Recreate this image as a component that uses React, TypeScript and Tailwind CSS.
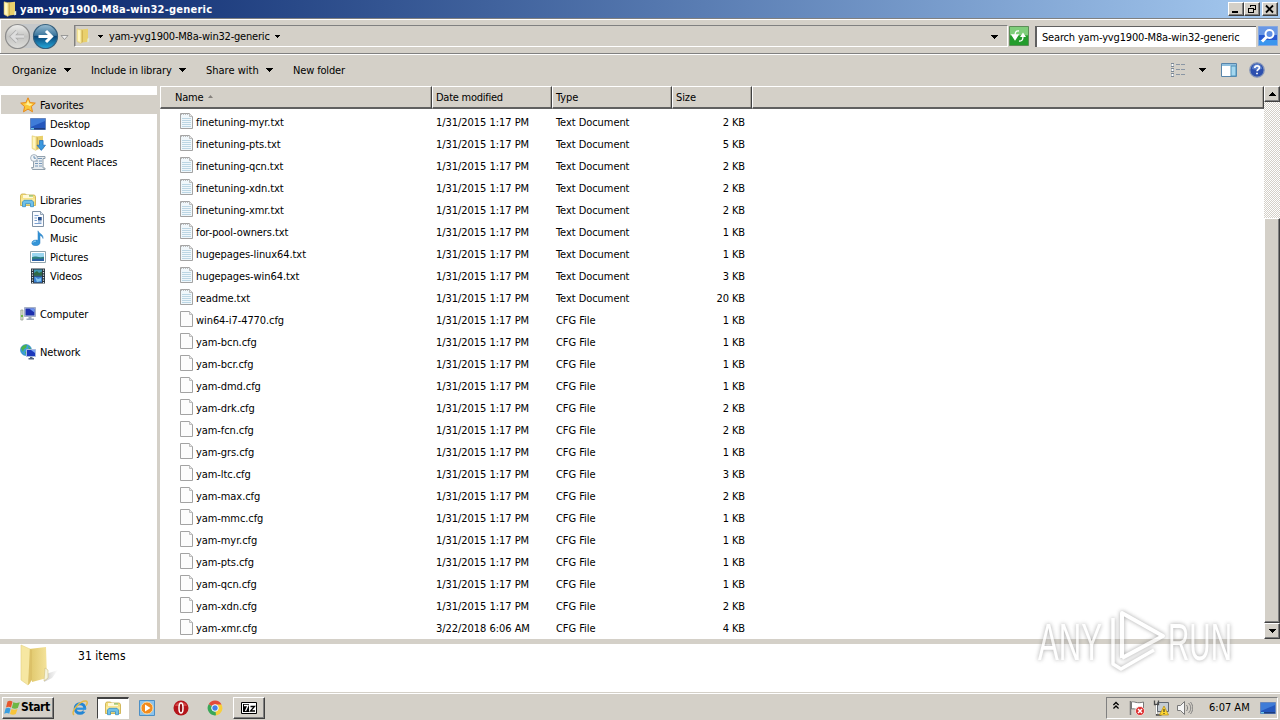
import type { ReactNode } from "react";

type IconProps = { children: ReactNode; className?: string; box?: string };

function Icon({ children, className = "w-4 h-4", box = "0 0 16 16" }: IconProps) {
  return (
    <svg viewBox={box} className={`${className} block shrink-0`} fill="none">
      {children}
    </svg>
  );
}

const FolderArt = () => (
  <>
    <path d="M6 1.500 13 .8v13L7 14.500z" fill="#e9d06c" />
    <path d="M12.400 10.800l1.800-1v4l-2 .7z" fill="#e5ecd4" />
    <path d="M2 .8 7 2v12L6 15.500 2 13.500z" fill="#f7e99f" stroke="#dcc468" strokeWidth=".5" />
    <path d="M6.500 2v13l1.500-1.200V2.400z" fill="#d4b553" />
    <path d="M3 2l2 .5v11l-2-.8z" fill="#fff6c0" />
  </>
);

const StarIcon = () => (
  <Icon>
    <path d="M8 .8l2.100 4.800 5.200.5-3.900 3.500 1.100 5.200L8 12.100l-4.500 2.700 1.100-5.200L.7 6.100l5.200-.5z" fill="#fbc83a" stroke="#e88919" />
    <path d="M8 3l1.200 3.500 3.300.4-2.700 2L8 8.200 4.500 7l2.300-.6z" fill="#fff09a" />
  </Icon>
);
const DesktopIcon = () => (
  <Icon>
    <path d="M.5 2.500h15v11H.5z" fill="#2457bd" stroke="#6686bd" />
    <path d="M1 3h14v2L1 11z" fill="#3f7cd8" />
    <path d="M1 12h14v1.500H1z" fill="#1c3d80" />
    <path d="M1 12h3v1.500H1z" fill="#6bc4e8" />
  </Icon>
);
const DownloadsIcon = () => (
  <Icon>
    <FolderArt />
    <path d="M9.500 5.500h3.600v4.700h2.400L11.300 15.400 7 10.200h2.500z" fill="#3a98df" stroke="#1f69b4" strokeWidth=".7" />
  </Icon>
);
const RecentIcon = () => (
  <Icon>
    <path d="M4 2.500h11v2h-2v9.500h2v1.500H2.500l-1-2h2V6z" fill="#e7ecf0" stroke="#8797a5" strokeWidth=".9" />
    <path d="M5 7h3M9 7h3M5 9.500h3M9 9.500h3M5 12h3M9 12h3M8 4.500h4" stroke="#7798b9" />
    <circle cx="4" cy="4" r="3.400" fill="#f3f7fa" stroke="#91a0ae" strokeWidth=".8" />
    <path d="M4 2v2.200h2" stroke="#49759f" strokeWidth=".8" />
  </Icon>
);
const LibrariesIcon = () => (
  <Icon>
    <path d="M.5 3.500 1.500 2h4l1 1h8l1 1.500v9H.5z" fill="#f3de7c" stroke="#c8a944" strokeWidth=".8" />
    <path d="M3 3h10v3H3z" fill="#fff9d9" />
    <path d="M9 3.300h4v1.200H9z" fill="#7fb34f" />
    <path d="M1 6.500h14v3H1z" fill="#fae99a" />
    <path d="M2.500 14.700V10l1.500-1.700h8l1.500 1.700v4.700h-3v-3h-5v3z" fill="#6fc0e9" stroke="#3a8fc4" strokeWidth=".8" />
  </Icon>
);
const DocumentIcon = () => (
  <Icon>
    <path d="M2.500.500h8l3 3v12h-11z" fill="#fafcff" stroke="#7f91a5" />
    <path d="M10.500.500v3h3" fill="#dce6ef" stroke="#7f91a5" strokeWidth=".8" />
    <path d="M4.500 4.500h4M4.500 7h2.500M4.500 9.500h2.500M4.500 12.500h7M8 11h3.500" stroke="#7a9fce" />
    <path d="M8 6h3.700v3.500H8z" fill="#28518d" />
  </Icon>
);
const MusicIcon = () => (
  <Icon>
    <path d="M8 .8c.5 3 5.600 3.200 5 7.700-.6-2.300-2-2.800-3-3v7.200c0 1.700-2 3-4.400 3-2.200 0-3.800-1-3.800-2.500 0-2 2-3.200 4.300-3.100.8 0 1.500.1 1.900.3z" fill="#3595d8" stroke="#277abf" strokeWidth=".5" />
    <path d="M3 12.500c.5-1 2-1.500 3-1.300" stroke="#a7dcfa" />
  </Icon>
);
const PicturesIcon = () => (
  <Icon>
    <path d="M.5 2.500h15v11H.5z" fill="#fff" stroke="#91a4ad" />
    <path d="M2 4h12v8H2z" fill="#9bd6f0" />
    <path d="M2 8.200c4-2 6 1 12-.5V12H2z" fill="#2e827f" />
    <path d="M2 10.400c4-1 8-.5 12-1V12H2z" fill="#2b60a4" />
  </Icon>
);
const VideosIcon = () => (
  <Icon>
    <path d="M1 .5h14v15H1z" fill="#26323c" />
    <path d="M4 1.500h8v6H4z" fill="#3f97b1" />
    <path d="M4 5l3-2 2 2 3-1.500v4H4z" fill="#2f6a45" />
    <path d="M4 8.500h8v6H4z" fill="#3a7fd0" />
    <path d="M5 9l3 2 3-1v3l-4 1z" fill="#82c6ee" />
    <path d="M2.500 1.500v14M13.500 1.500v14" stroke="#dce4e8" strokeWidth="1.200" strokeDasharray="1.200 1.300" />
  </Icon>
);
const ComputerIcon = () => (
  <Icon>
    <path d="M.8 4h2.200v10H.8z" fill="#d7dfcd" stroke="#8f9a8a" strokeWidth=".7" />
    <path d="M1 9h2v2H1z" fill="#6ebb47" />
    <path d="M4.500 1.500h11v9h-11z" fill="#c6cfdf" stroke="#8998b4" strokeWidth=".7" />
    <path d="M5.500 2.500h9v7h-9z" fill="#1c2fae" />
    <path d="M9 2.500h5.500v4z" fill="#6d95ed" />
    <path d="M8.500 11h3v1.500H14V14H6.500v-1.500h2z" fill="#9caabd" />
  </Icon>
);
const NetworkIcon = () => (
  <Icon>
    <circle cx="6" cy="6" r="5.500" fill="#3b9fda" stroke="#1f75aa" strokeWidth=".5" />
    <path d="M1 4c2-3 5-3.500 6-3l-1 3-2 1-1 3zM5 8l3-1 1 3-3 1zM8 2l3 3-2 .5z" fill="#4cb34a" />
    <path d="M6.500 5.500h9v7h-9z" fill="#1d39bd" stroke="#aabce0" />
    <path d="M11 6h4v3z" fill="#7ca6f5" />
    <path d="M10 13h2.500v1H14v1.500H8.500V14H10z" fill="#52647f" />
  </Icon>
);

function FileIcon({ text }: { text: boolean }) {
  return (
    <Icon>
      <path d="M1.500.500h9l3 3v12h-12z" fill={text ? "#f0f7fb" : "#fcfcfc"} stroke="#a3a3a3" />
      <path d="M10.500.500v3h3" fill="#e8e8e8" stroke="#b0b0b0" strokeWidth=".8" />
      {text && (
        <>
          <path d="M3 5.500h9M3 7.500h9M3 9.500h9M3 11.500h9M3 13.500h9" stroke="#bcd6e4" />
          <path d="M2 1h8" stroke="#aaa" strokeWidth="1.500" strokeDasharray="1 1" />
        </>
      )}
    </Icon>
  );
}

function Caret({ className = "h-1 w-[7px]" }: { className?: string }) {
  return (
    <svg viewBox="0 0 7 4" className={`shrink-0 ${className}`} shapeRendering="crispEdges">
      <path d="M0 0h7L3.500 4z" fill="#000" />
    </svg>
  );
}

function WinButton({ children }: { children: ReactNode }) {
  return (
    <div className="flex h-[14px] w-4 items-center justify-center border border-t-white border-r-[#404040] border-b-[#404040] border-l-white bg-[#d4d0c8] shadow-[inset_-1px_-1px_0_#808080]">
      <svg viewBox="0 0 12 10" className="h-[10px] w-3" fill="none" stroke="#000">
        {children}
      </svg>
    </div>
  );
}

const nav: { label: string; icon: ReactNode; root?: boolean }[][] = [
  [
    { label: "Favorites", icon: <StarIcon />, root: true },
    { label: "Desktop", icon: <DesktopIcon /> },
    { label: "Downloads", icon: <DownloadsIcon /> },
    { label: "Recent Places", icon: <RecentIcon /> },
  ],
  [
    { label: "Libraries", icon: <LibrariesIcon />, root: true },
    { label: "Documents", icon: <DocumentIcon /> },
    { label: "Music", icon: <MusicIcon /> },
    { label: "Pictures", icon: <PicturesIcon /> },
    { label: "Videos", icon: <VideosIcon /> },
  ],
  [{ label: "Computer", icon: <ComputerIcon />, root: true }],
  [{ label: "Network", icon: <NetworkIcon />, root: true }],
];

const files: [string, number][] = [
  ["finetuning-myr.txt", 2],
  ["finetuning-pts.txt", 5],
  ["finetuning-qcn.txt", 2],
  ["finetuning-xdn.txt", 2],
  ["finetuning-xmr.txt", 2],
  ["for-pool-owners.txt", 1],
  ["hugepages-linux64.txt", 1],
  ["hugepages-win64.txt", 3],
  ["readme.txt", 20],
  ["win64-i7-4770.cfg", 1],
  ["yam-bcn.cfg", 1],
  ["yam-bcr.cfg", 1],
  ["yam-dmd.cfg", 1],
  ["yam-drk.cfg", 2],
  ["yam-fcn.cfg", 2],
  ["yam-grs.cfg", 1],
  ["yam-ltc.cfg", 3],
  ["yam-max.cfg", 2],
  ["yam-mmc.cfg", 1],
  ["yam-myr.cfg", 1],
  ["yam-pts.cfg", 1],
  ["yam-qcn.cfg", 1],
  ["yam-xdn.cfg", 2],
  ["yam-xmr.cfg", 4],
];

function TitleBar() {
  return (
    <div className="flex h-[18px] items-center bg-linear-to-r from-[#0a246a] to-[#a6caf0] pr-0.5 pl-0.5">
      <Icon><FolderArt /></Icon>
      <span className="ml-0.5 font-bold tracking-[0.22px] text-white">yam-yvg1900-M8a-win32-generic</span>
      <div className="ml-auto flex">
        <WinButton><path d="M2 8h6" strokeWidth="2" /></WinButton>
        <WinButton><path d="M4.500 3V1.500h5v4H8M4 1h6M2.500 4.500h5v4h-5zM2 4h6" shapeRendering="crispEdges" /></WinButton>
        <div className="w-0.5" />
        <WinButton><path d="M2 1.500l7 7M9 1.500l-7 7" strokeWidth="1.800" /></WinButton>
      </div>
    </div>
  );
}

function AddressBar() {
  return (
    <div className="flex h-9 items-center border-t border-b border-t-[#808080] border-b-[#808080] pr-0.5 pl-1 shadow-[inset_1px_1px_0_#fff,0_1px_0_#fff]">
      <Icon className="h-7 w-[66px]" box="0 0 66 28">
        <defs>
          <linearGradient id="back" x2="0" y2="1"><stop stopColor="#eeeeec" /><stop offset=".5" stopColor="#c4c4c2" /><stop offset="1" stopColor="#dededb" /></linearGradient>
          <linearGradient id="fwd" x2="0" y2="1"><stop stopColor="#9abdd2" /><stop offset=".45" stopColor="#3c779f" /><stop offset=".5" stopColor="#0b4779" /><stop offset="1" stopColor="#25a9dc" /></linearGradient>
        </defs>
        <path d="M14 2h28v24H14z" fill="#c5c8ca" />
        <circle cx="13.500" cy="14.500" r="12" fill="url(#back)" stroke="#8d8d8d" strokeWidth="1.200" />
        <path d="M20 14.500H8m5-5-5 5 5 5" stroke="#aaa" strokeWidth="4" />
        <path d="M20 14.500H8m5-5-5 5 5 5" stroke="#dedede" strokeWidth="2.500" />
        <circle cx="41.500" cy="14.500" r="12" fill="url(#fwd)" stroke="#37617e" strokeWidth="1.200" />
        <path d="M34.500 14.500h13m-5.500-5.500 5.500 5.500-5.500 5.500" stroke="#fff" strokeWidth="3" />
        <path d="M57 13.500h7l-3.500 4z" fill="#eee" stroke="#888" strokeWidth=".8" />
      </Icon>
      <div className="ml-1 flex h-[22px] flex-1 items-center border border-t-[#808080] border-r-white border-b-white border-l-[#808080] shadow-[inset_1px_0_0_#b0aca4]">
        <Icon><FolderArt /></Icon>
        <Caret className="ml-[7px] h-[3px] w-[5px]" />
        <span className="ml-[6px] tracking-[-0.2px]">yam-yvg1900-M8a-win32-generic</span>
        <Caret className="ml-[5px] h-[3px] w-[5px]" />
        <Caret className="mt-0.5 mr-[9px] ml-auto h-1 w-[7px]" />
      </div>
      <Icon className="ml-px h-5 w-5" box="0 0 20 20">
        <path d="M.5.5h19v19H.5z" fill="#43ae45" stroke="#5d8d59" />
        <path d="M1 1h18v8H1z" fill="#7fce7b" />
        <path d="M1 10h18v9H1z" fill="#239c2c" />
        <path d="M10 5C7 4.500 6 6 6 10M3 9h6l-3 4.500z" stroke="#fff" strokeWidth="1.300" />
        <path d="M3 9h6l-3 4.500zM11 11h6l-3-4.500z" fill="#fff" />
        <path d="M10 15c3 .5 4-1 4-5" stroke="#fff" strokeWidth="1.300" />
      </Icon>
      <div className="ml-1.5 flex h-[21px] w-[221px] items-center border-t border-l-2 border-[#606060] bg-white pt-0.5 pl-[5px]">
        <span className="tracking-[-0.17px]">Search yam-yvg1900-M8a-win32-generic</span>
      </div>
      <Icon className="ml-0.5 h-5 w-5" box="0 0 20 20">
        <path d="M.5.5h19v19H.5z" fill="#2859d0" stroke="#86a8df" />
        <path d="M1 1h18v8H1z" fill="#6897e5" />
        <path d="M1 14h18v5H1z" fill="#3b96ee" />
        <circle cx="11.500" cy="8" r="4" fill="#5e8ee4" stroke="#fff" strokeWidth="2" />
        <path d="M8.500 11 4 15.500" stroke="#fff" strokeWidth="3" />
      </Icon>
    </div>
  );
}

function Toolbar() {
  return (
    <div className="flex h-[31px] items-center pt-px pl-3">
      <span className="w-[52px]">Organize</span><Caret />
      <span className="ml-5 w-[88px] tracking-[-0.14px]">Include in library</span><Caret />
      <span className="ml-5 w-[60px]">Share with</span><Caret />
      <span className="ml-5 tracking-[-0.15px]">New folder</span>
      <div className="mr-[15px] ml-auto flex items-center">
        <Icon>
          <path d="M1 3h3M1 8h3M1 13h3" stroke="#7b8896" strokeWidth="4" />
          <path d="M1.500 3h2M1.500 8h2M1.500 13h2" stroke="#fff" strokeWidth="2" />
          <path d="M6 2.500h10M6 7.500h10M6 12.500h10" stroke="#8a96a4" strokeDasharray="4 1" />
        </Icon>
        <Caret className="ml-[13px] h-1 w-[7px]" />
        <Icon className="ml-[15px] h-4 w-4">
          <path d="M.5 1.500h15v13H.5z" fill="#fff" stroke="#5784aa" />
          <path d="M1 2h14v2H1z" fill="#8fc0df" />
          <path d="M10 4h5v10h-5z" fill="#a4d7ef" stroke="#4f91b8" />
        </Icon>
        <Icon className="ml-3 h-4 w-4">
          <circle cx="8" cy="8" r="7.200" fill="#2c4fae" stroke="#8394b9" strokeWidth="1.300" />
          <path d="M3 7a5 5 0 0110 0c-3 1-7 1-10 0z" fill="#5d80cc" />
          <path d="M5.800 6c0-3 4.600-2.700 4.600-.3 0 1.700-2.300 1.700-2.300 3.600M8 10.700v1.600" stroke="#fff" strokeWidth="1.700" />
        </Icon>
      </div>
    </div>
  );
}

function Sidebar() {
  return (
    <div className="flex w-40 shrink-0 flex-col gap-[19px] border-r-[3px] border-[#d4d0c8] bg-white pt-[9px]">
      {nav.map((group, i) => (
        <div key={i}>
          {group.map((n) => (
            <div
              key={n.label}
              className={`flex h-[19px] items-center gap-1 ${n.label === "Favorites" ? "ml-px bg-[#d4d0c8] pl-[19px]" : n.root ? "pl-5" : "pl-[30px]"}`}
            >
              {n.icon}
              <span className="pt-0.5 tracking-[-0.12px]">{n.label}</span>
            </div>
          ))}
        </div>
      ))}
    </div>
  );
}

function HeaderCell({ children, className }: { children?: ReactNode; className: string }) {
  return (
    <div className={`flex h-[23px] items-center border-t border-r border-b-2 border-l border-t-white border-r-[#404040] border-b-[#606060] border-l-white bg-[#d4d0c8] pt-px shadow-[inset_-1px_0_0_#a8a49c] ${className}`}>
      {children}
    </div>
  );
}

function FileList() {
  return (
    <div className="flex min-w-0 flex-1 flex-col bg-white">
      <div className="flex">
        <HeaderCell className="w-[272px] pl-[14px] tracking-[-0.2px]">
          Name
          <svg viewBox="0 0 5 3" className="mb-[3px] ml-[5px] h-[3px] w-[5px]"><path d="M0 3h5L2.500 0z" fill="#85817c" /></svg>
        </HeaderCell>
        <HeaderCell className="w-[120px] pl-[3px] tracking-[-0.25px]">Date modified</HeaderCell>
        <HeaderCell className="w-[120px] pl-[3px] tracking-[-0.1px]">Type</HeaderCell>
        <HeaderCell className="w-20 pl-[3px] tracking-[-0.1px]">Size</HeaderCell>
        <HeaderCell className="flex-1" />
      </div>
      <div className="pt-0.5">
        {files.map(([name, kb]) => (
          <div key={name} className="flex h-[22px] items-center">
            <div className="flex w-[276px] items-center pl-[19px]">
              <div className="mb-0.5"><FileIcon text={name.endsWith(".txt")} /></div>
              <span className="ml-px tracking-[-0.08px]">{name}</span>
            </div>
            <span className="w-[120px] tracking-[-0.04px]">{name === "yam-xmr.cfg" ? "3/22/2018 6:06 AM" : "1/31/2015 1:17 PM"}</span>
            <span className="w-[120px] tracking-[-0.06px]">{name.endsWith(".txt") ? "Text Document" : "CFG File"}</span>
            <span className="w-[69px] text-right tracking-[-0.1px]">{kb} KB</span>
          </div>
        ))}
      </div>
    </div>
  );
}

function ScrollButton({ up }: { up?: boolean }) {
  return (
    <div className="flex h-4 w-4 items-center justify-center border border-t-white border-r-[#404040] border-b-[#404040] border-l-white bg-[#d4d0c8] shadow-[inset_-1px_-1px_0_#808080]">
      <Caret className={up ? "h-1 w-[7px] rotate-180" : "h-1 w-[7px]"} />
    </div>
  );
}

function ScrollBar() {
  return (
    <div className="flex w-4 shrink-0 flex-col bg-[repeating-conic-gradient(#d4d0c8_0_25%,#fff_0_50%)] bg-size-[2px_2px]">
      <ScrollButton up />
      <div className="mt-[116px] flex-1 border border-t-white border-r-[#404040] border-b-[#404040] border-l-white bg-[#d4d0c8] shadow-[inset_-1px_-1px_0_#808080]" />
      <ScrollButton />
    </div>
  );
}

function Taskbar() {
  return (
    <div className="flex h-[27px] items-center border-t border-white pt-px pr-0.5 pl-0.5">
      <div className="flex h-[22px] w-[52px] items-center border border-t-white border-r-[#404040] border-b-[#404040] border-l-white pl-px shadow-[inset_-1px_-1px_0_#808080]">
        <Icon>
          <path d="M3.500 1.500c2-1 3.500-.8 5 .3L7 7.500c-1.600-1-3.200-1-5 0z" fill="#e7572c" />
          <path d="M9.300 2.200c2 1 3.600 1 6.500.1L13.800 8c-2 1-4.200.8-6-.1z" fill="#6eb745" />
          <path d="M1.600 8.500c2-1 3.500-.8 5 .2l-1.400 5c-1.500-1-3-1-5 0z" fill="#399ee0" />
          <path d="M7.500 9c2 1 3.600 1 6 0l-1.700 5c-2 1-4 .8-5.800-.1z" fill="#f7c43a" />
        </Icon>
        <span className="ml-px text-[12px] font-bold tracking-[-0.4px]">Start</span>
      </div>
      <Icon className="ml-[18px] h-4 w-4">
        <circle cx="8" cy="8.500" r="4.800" stroke="#2386d4" strokeWidth="3" />
        <path d="M4 8.700h10" stroke="#2b92df" strokeWidth="2.200" />
        <path d="M11.500 10.800h4" stroke="#d4d0c8" strokeWidth="2" />
        <path d="M2 15C-2 12 8 .5 14 1c2 .3 1.200 3 0 4.500" stroke="#e3b947" strokeWidth="1.500" />
      </Icon>
      <div className="ml-[9px] flex h-[22px] w-8 items-center justify-center border border-t-2 border-t-[#404040] border-r-white border-b-white border-l-[#404040] bg-white"><LibrariesIcon /></div>
      <Icon className="ml-[10px] h-4 w-4">
        <path d="M.5.5h15v15H.5z" fill="#8bc3ed" stroke="#4c8fc5" />
        <circle cx="8" cy="8" r="6" fill="#f38b1d" stroke="#fbdca7" />
        <path d="M6 4.500v7L11.500 8z" fill="#fff" />
      </Icon>
      <Icon className="ml-[18px] h-4 w-4">
        <circle cx="8" cy="8" r="7.500" fill="#b5151b" />
        <path d="M2 6C3 1 13 1 14 6z" fill="#d24545" />
        <ellipse cx="8" cy="8" rx="2" ry="5" fill="#8f1015" stroke="#fff" strokeWidth="1.500" />
      </Icon>
      <Icon className="ml-[18px] h-4 w-4">
        <path d="M8 8 1.700 4.300A7.300 7.300 0 0114.500 4.500z" fill="#e24a3b" />
        <path d="M8 8V4.500h6.500A7.300 7.300 0 018 15.300z" fill="#f7cf3c" />
        <path d="M8 8l1 7.300A7.300 7.300 0 011.700 4.300z" fill="#3aa757" />
        <circle cx="8" cy="8" r="3.300" fill="#427fe8" stroke="#fff" />
      </Icon>
      <div className="ml-[10px] flex h-[22px] w-8 items-center justify-center border border-t-white border-r-[#404040] border-b-[#404040] border-l-white shadow-[inset_-1px_-1px_0_#808080]">
        <Icon className="h-3 w-4" box="0 0 16 12">
          <path d="M.5.5h15v11H.5z" fill="#fff" stroke="#000" />
          <path d="M2 2h6v8H2z" fill="#000" />
          <path d="M3 3.500h4L4.500 9" stroke="#fff" strokeWidth="1.300" />
          <path d="M9.500 4.500h4l-4 4.500h4.500" stroke="#000" strokeWidth="1.300" />
        </Icon>
      </div>
      <div className="ml-auto flex h-[22px] w-[172px] items-center border border-t-[#808080] border-r-white border-b-white border-l-[#808080] pr-px pl-[6px]">
        <Icon className="mb-1 h-[9px] w-[6px]" box="0 0 7 10"><path d="M.5 4.500 3.500 1.500l3 3M.5 8.500l3-3 3 3" stroke="#000" strokeWidth="1.500" /></Icon>
        <Icon className="ml-[10px] h-4 w-4">
          <path d="M1.500 15V1" stroke="#777" strokeWidth="1.500" />
          <path d="M2.500 2c3-1 5 2 12 0v7c-6 2-8-1-12 0z" fill="#fff" stroke="#777" />
          <circle cx="11" cy="11" r="4.500" fill="#dc2c2c" stroke="#fff" strokeWidth=".7" />
          <path d="M9 9l4 4m0-4-4 4" stroke="#fff" strokeWidth="1.500" />
        </Icon>
        <Icon className="ml-2 h-4 w-4">
          <path d="M4.500 2.500h11v9h-11z" fill="#c4ccd3" stroke="#606872" />
          <path d="M1.500.500v4h4v-4M3.500 4.500V15h5" stroke="#4b4b4b" strokeWidth="1.300" />
          <path d="M3.500 5v9" stroke="#fff" />
          <path d="M11 6l4.500 9h-9z" fill="#ffd733" stroke="#b58b12" strokeWidth=".7" />
          <path d="M11 9v3M11 13v1" stroke="#222" />
        </Icon>
        <Icon className="ml-2 h-4 w-4">
          <path d="M.5 5.500h3l4-4v13l-4-4h-3z" fill="#f5f5f5" stroke="#777" />
          <path d="M9.500 5c1.500 2 1.500 4 0 6M11.500 3c3 3 3 7 0 10M13.500 2c3 4 3 8 0 12" stroke="#777" strokeWidth=".9" />
        </Icon>
        <span className="ml-[16px]">6:07 AM</span>
        <div className="ml-auto"><DesktopIcon /></div>
      </div>
    </div>
  );
}

function Watermark() {
  return (
    <svg viewBox="0 0 230 90" className="pointer-events-none absolute top-[600px] left-[1030px] h-[90px] w-[230px] overflow-visible opacity-75 drop-shadow-[0_0_2px_#888]" fill="none">
      <g fill="#fff" fontFamily="Liberation Sans Narrow, Liberation Sans, sans-serif" fontSize="51">
        <text x="8" y="60" textLength="64" lengthAdjust="spacingAndGlyphs">ANY</text>
        <text x="138" y="60" textLength="64" lengthAdjust="spacingAndGlyphs">RUN</text>
      </g>
      <g stroke="#fff" strokeWidth="4" strokeLinejoin="round">
        <path d="M92 58V13l41 23-41 22" />
        <path d="M83 18v46l8 5 33-19" strokeWidth="3.500" />
      </g>
    </svg>
  );
}

export default function App() {
  return (
    <div className="relative flex h-[720px] w-[1280px] flex-col overflow-hidden bg-[#d4d0c8] font-['DejaVu_Sans_Condensed','DejaVu_Sans',sans-serif] text-[11px] leading-[13px] whitespace-nowrap text-black [font-stretch:condensed]">
      <TitleBar />
      <AddressBar />
      <Toolbar />
      <div className="mt-px flex h-[553px] shrink-0">
        <Sidebar />
        <FileList />
        <ScrollBar />
      </div>
      <div className="mt-[5px] mb-px flex h-12 shrink-0 bg-white">
        <Icon className="ml-[18px] h-11 w-11" box="0 0 44 44">
          <defs>
            <linearGradient id="fold"><stop stopColor="#dfc669" /><stop offset="1" stopColor="#f4e39b" /></linearGradient>
            <linearGradient id="shade"><stop stopColor="#ccc" /><stop offset="1" stopColor="#fff" /></linearGradient>
          </defs>
          <path d="M28 30l12-4-6 8-8 4z" fill="url(#shade)" />
          <path d="M11 5 28 3l1 31-15 4z" fill="url(#fold)" />
          <path d="M27 24l3 2v8l-4 3z" fill="#f5f4df" stroke="#cbb971" strokeWidth=".5" />
          <path d="M3 1l9 4v34l-2 2-7-5z" fill="#f6e7a2" stroke="#e4d181" strokeWidth=".6" />
          <path d="M12 5l2 1v30l-4 5z" fill="#dcc168" />
        </Icon>
        <span className="mt-[6px] ml-4 text-[12px] tracking-[0.05px]">31 items</span>
      </div>
      <Taskbar />
      <Watermark />
    </div>
  );
}
